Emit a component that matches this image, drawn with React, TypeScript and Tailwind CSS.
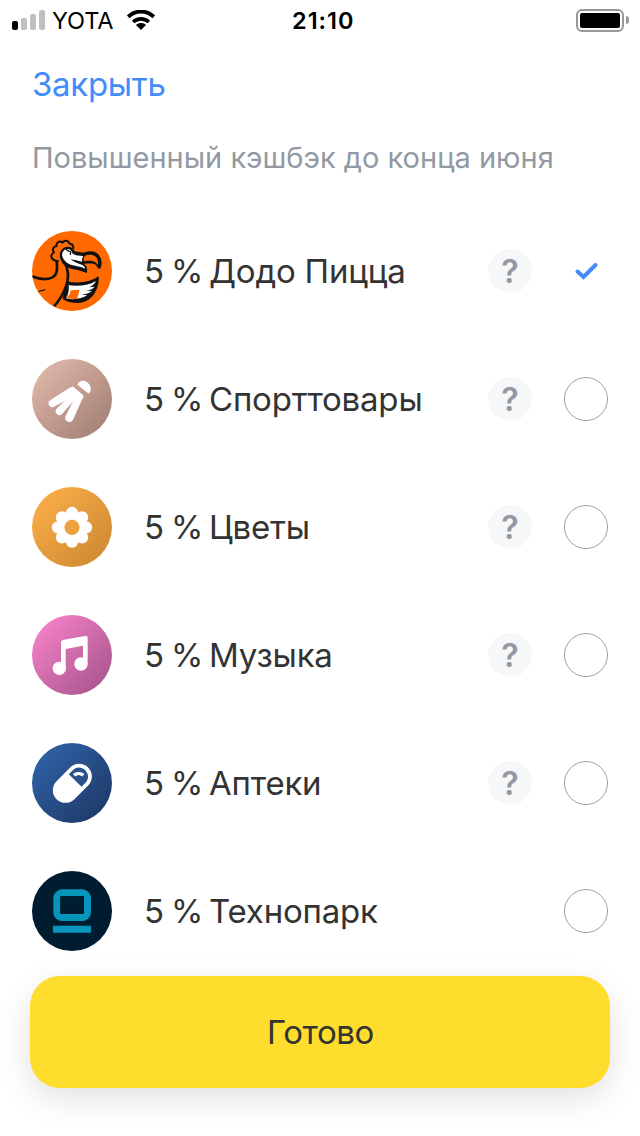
import clsx from "clsx"
import { ReactNode, useState } from "react"

export default function App() {
  const [selected, setSelected] = useState("dodo")

  return (
    <main className="flex h-[1136px] w-[640px] flex-col overflow-hidden bg-white font-['Inter','Liberation_Sans',sans-serif] text-[#333]">
      <StatusBar />
      <nav className="flex h-[88px] items-center pl-8">
        <button className="text-[33px] leading-10 tracking-[-0.3px] text-[#428bf9]">
          Закрыть
        </button>
      </nav>
      <h1 className="h-[103px] pt-[10px] pl-8 text-[29px] leading-10 whitespace-nowrap text-[#9299a2]">
        Повышенный кэшбэк до конца июня
      </h1>
      <div className="flex flex-col gap-12 px-8">
        {categories.map((category) => (
          <CategoryRow
            key={category.id}
            category={category}
            checked={category.id === selected}
            onSelect={() => setSelected(category.id)}
          />
        ))}
      </div>
      <button className="mx-[30px] mt-[25px] h-28 shrink-0 rounded-[30px] bg-[#ffdd2d] pt-0.5 pl-px text-[33px] tracking-[-0.4px] shadow-[0_10px_32px_rgba(0,0,0,0.12)]">
        Готово
      </button>
    </main>
  )
}

function StatusBar() {
  return (
    <header className="grid h-10 shrink-0 grid-cols-[292px_1fr_auto] items-center pr-[11px] text-black">
      <div className="flex h-10 items-center pl-3">
        <div className="flex h-5 items-end gap-[3px]">
          <i className="h-[9px] w-1.5 rounded-[2px] bg-black" />
          <i className="h-3 w-1.5 rounded-[2px] bg-[#bfbfbf]" />
          <i className="h-4 w-1.5 rounded-[2px] bg-[#bfbfbf]" />
          <i className="h-5 w-1.5 rounded-[2px] bg-[#bfbfbf]" />
        </div>
        <span className="mt-0.5 ml-[7px] w-[75px] text-[23.5px] tracking-[-0.1px]">YOTA</span>
        <svg viewBox="0 0 28 20" className="h-5 w-7">
          <path
            d="M1.2 6.8C8.2-.2 19.8-.2 26.8 6.8M6.2 12c4.4-4.2 11.2-4.2 15.6 0"
            fill="none"
            stroke="currentColor"
            strokeWidth="3.8"
          />
          <path d="M9 15c3-2.6 7-2.6 10 0l-5 5z" fill="currentColor" />
        </svg>
      </div>
      <time className="pt-0.5 text-[23.5px] font-semibold tracking-[1px]">21:10</time>
      <div className="flex items-center gap-0.5">
        <div className="h-[23px] w-12 rounded-[6px] border-2 border-[#999] p-[2px]">
          <div className="h-full rounded-[2px] bg-black" />
        </div>
        <div className="h-2 w-[3px] rounded-r-full bg-[#999]" />
      </div>
    </header>
  )
}

function CategoryRow({ category, checked, onSelect }: CategoryRowProps) {
  return (
    <div className="flex h-20 shrink-0 items-center">
      <div
        className={clsx(
          "h-20 w-20 shrink-0 overflow-hidden rounded-full",
          category.background,
        )}
      >
        <svg viewBox="0 0 240 240" className="h-full w-full text-white">
          {category.icon}
        </svg>
      </div>
      <div className="ml-8 flex flex-1 text-[33px] leading-10 whitespace-nowrap">
        <span className="w-[65px] tracking-[-0.2px] [word-spacing:-2px]">5 %</span>
        <span className="tracking-[-0.2px]">{category.name}</span>
      </div>
      {category.hasInfo && (
        <button className="mr-8 h-11 w-11 rounded-full bg-[#f6f7f8] pt-px text-[32px] leading-[44px] font-semibold text-[#9299a2]">
          ?
        </button>
      )}
      <button
        onClick={onSelect}
        className={clsx(
          "flex h-11 w-11 items-center justify-center rounded-full",
          !checked && "border border-[#a0a0a0]",
        )}
      >
        {checked && (
          <svg viewBox="0 0 24 18" className="h-[18px] w-6">
            <path
              d="m3.5 9.5 6 5.5 12-12"
              fill="none"
              stroke="#428bf9"
              strokeWidth="4"
              strokeLinecap="round"
            />
          </svg>
        )}
      </button>
    </div>
  )
}

const DodoIcon = (
  <>
    {/* neck */}
    <path
      d="M0 136c22 9 46 10 61 3 16-8 15-28 13-50M94 90c15 18 18 50 8 76-7 20-18 40-36 60"
      fill="none"
      stroke="#111"
      strokeWidth="8"
    />
    <path d="M16 183c8-7 18-9 27-7-7 4-14 4-27 7z" fill="#111" />
    {/* wing */}
    <path d="M103 151c36 8 70 3 97-15 3 38-20 80-62 80-20 0-36-4-46-12z" fill="#111" />
    <path
      d="M110 163c30 4 59 0 82-13-4 9-11 15-21 19l17-2c-6 7-14 11-26 13l18 1c-8 6-17 9-31 9l17 3c-16 10-40 15-64 9 8-12 9-25 8-39z"
      fill="#fff"
    />
    <path d="m116 178 27-2-7 27c-11 2-22 1-33-2 8-6 12-13 13-23z" fill="#ff6900" />
    {/* crest */}
    <path
      d="M78 90c-9 0-22-6-20-16 1-5 4-8 8-10-6-7-3-18 8-19-3-11 10-17 17-10 7-9 19-7 21 3 8 0 12 6 12 13"
      fill="none"
      stroke="#111"
      strokeWidth="6"
      strokeLinecap="round"
      strokeLinejoin="round"
    />
    {/* head and beak */}
    <path
      d="M85 63c8-19 34-22 43-2l27 4c14-5 31-7 43 4 14 13 13 38 5 45-9-3-7-12-17-15-9-3-20-1-30-1 8 7 12 16 8 29-17-14-60-8-73-32-7-11-10-21-6-32z"
      fill="#111"
    />
    <path
      d="M92 64c7-14 26-13 29 3 7 7 20 7 33 8-4 6-4 12-4 17-12-3-24-5-34-8 8 9 23 13 34 17 5 3 9 7 9 12-20-10-46-7-60-23-8-9-11-18-7-26z"
      fill="#fff"
    />
    <path d="M159 74c13-6 31-3 36 8 4 8 4 15 2 21-5-14-22-15-42-12-1-6 0-12 4-17z" fill="#ff6900" />
    <path
      d="m103 56 9 5m4 1-1 8"
      fill="none"
      stroke="#111"
      strokeWidth="4"
      strokeLinecap="round"
    />
  </>
)

const ShuttlecockIcon = (
  <g fill="currentColor">
    <path d="M137 75c7-11 21-13 30-4 10 8 12 20 7 29-2 3-5 3-8 1l-28-22c-2-1-2-3-1-4z" />
    <path d="m115 85-59 38a11 11 0 0 0 10 20l58-31z" />
    <path d="m123 101-48 47a11 11 0 0 0 15 17l45-51z" />
    <path d="m133 107-32 64a11 11 0 0 0 22 11l31-69z" />
    <path d="m112 88 8-5q3-1 6 2l27 23q2 2 1 5l-4 8-12-4-14-7z" />
  </g>
)

const FlowerIcon = (
  <g>
    <g fill="currentColor">
      <circle cx="120" cy="78" r="18.5" />
      <circle cx="150" cy="91" r="18.5" />
      <circle cx="162" cy="121" r="18.5" />
      <circle cx="150" cy="151" r="18.5" />
      <circle cx="120" cy="164" r="18.5" />
      <circle cx="90" cy="151" r="18.5" />
      <circle cx="78" cy="121" r="18.5" />
      <circle cx="90" cy="91" r="18.5" />
      <circle cx="120" cy="121" r="36" />
    </g>
    <circle cx="120" cy="121" r="23" fill="#eaa13e" />
  </g>
)

const MusicIcon = (
  <g fill="currentColor">
    <path d="M87 84c0-6 2-8 8-10l64-11c6-1 8 1 8 6v77h-14V92l-52 10v58H87z" />
    <circle cx="82" cy="160" r="20" />
    <circle cx="147" cy="147" r="20" />
  </g>
)

const PillIcon = (
  <>
    <g transform="rotate(-45 121 121)">
      <rect x="54" y="83" width="134" height="76" rx="38" fill="currentColor" />
      <path d="M133 94h17c15 0 26 12 26 27s-11 27-26 27h-17z" fill="#29518c" />
    </g>
    <path
      d="m126 97c8-7 20-7 28 0"
      fill="none"
      stroke="currentColor"
      strokeWidth="10"
    />
  </>
)

const TechnoparkIcon = (
  <g fill="none" stroke="#0795bb">
    <rect x="74.5" y="65.5" width="92" height="74" rx="16" strokeWidth="21" />
    <path d="M63 175h114" strokeWidth="21" />
    <path d="M85 76h71v53H85z" fill="#001c31" stroke="none" />
  </g>
)

const categories: Category[] = [
  {
    id: "dodo",
    name: "Додо Пицца",
    background: "bg-[#ff6900]",
    hasInfo: true,
    icon: DodoIcon,
  },
  {
    id: "sport",
    name: "Спорттовары",
    background: "bg-linear-to-br from-[#e5bdae] to-[#9d7b70]",
    hasInfo: true,
    icon: ShuttlecockIcon,
  },
  {
    id: "flowers",
    name: "Цветы",
    background: "bg-linear-to-br from-[#ffb04a] to-[#c98731]",
    hasInfo: true,
    icon: FlowerIcon,
  },
  {
    id: "music",
    name: "Музыка",
    background: "bg-linear-to-br from-[#ff86cf] to-[#a05287]",
    hasInfo: true,
    icon: MusicIcon,
  },
  {
    id: "pharmacy",
    name: "Аптеки",
    background: "bg-linear-to-br from-[#3268b0] to-[#1c3460]",
    hasInfo: true,
    icon: PillIcon,
  },
  {
    id: "technopark",
    name: "Технопарк",
    background: "bg-[#001c31]",
    hasInfo: false,
    icon: TechnoparkIcon,
  },
]

type Category = {
  id: string
  name: string
  background: string
  hasInfo: boolean
  icon: ReactNode
}

type CategoryRowProps = {
  category: Category
  checked: boolean
  onSelect: () => void
}
